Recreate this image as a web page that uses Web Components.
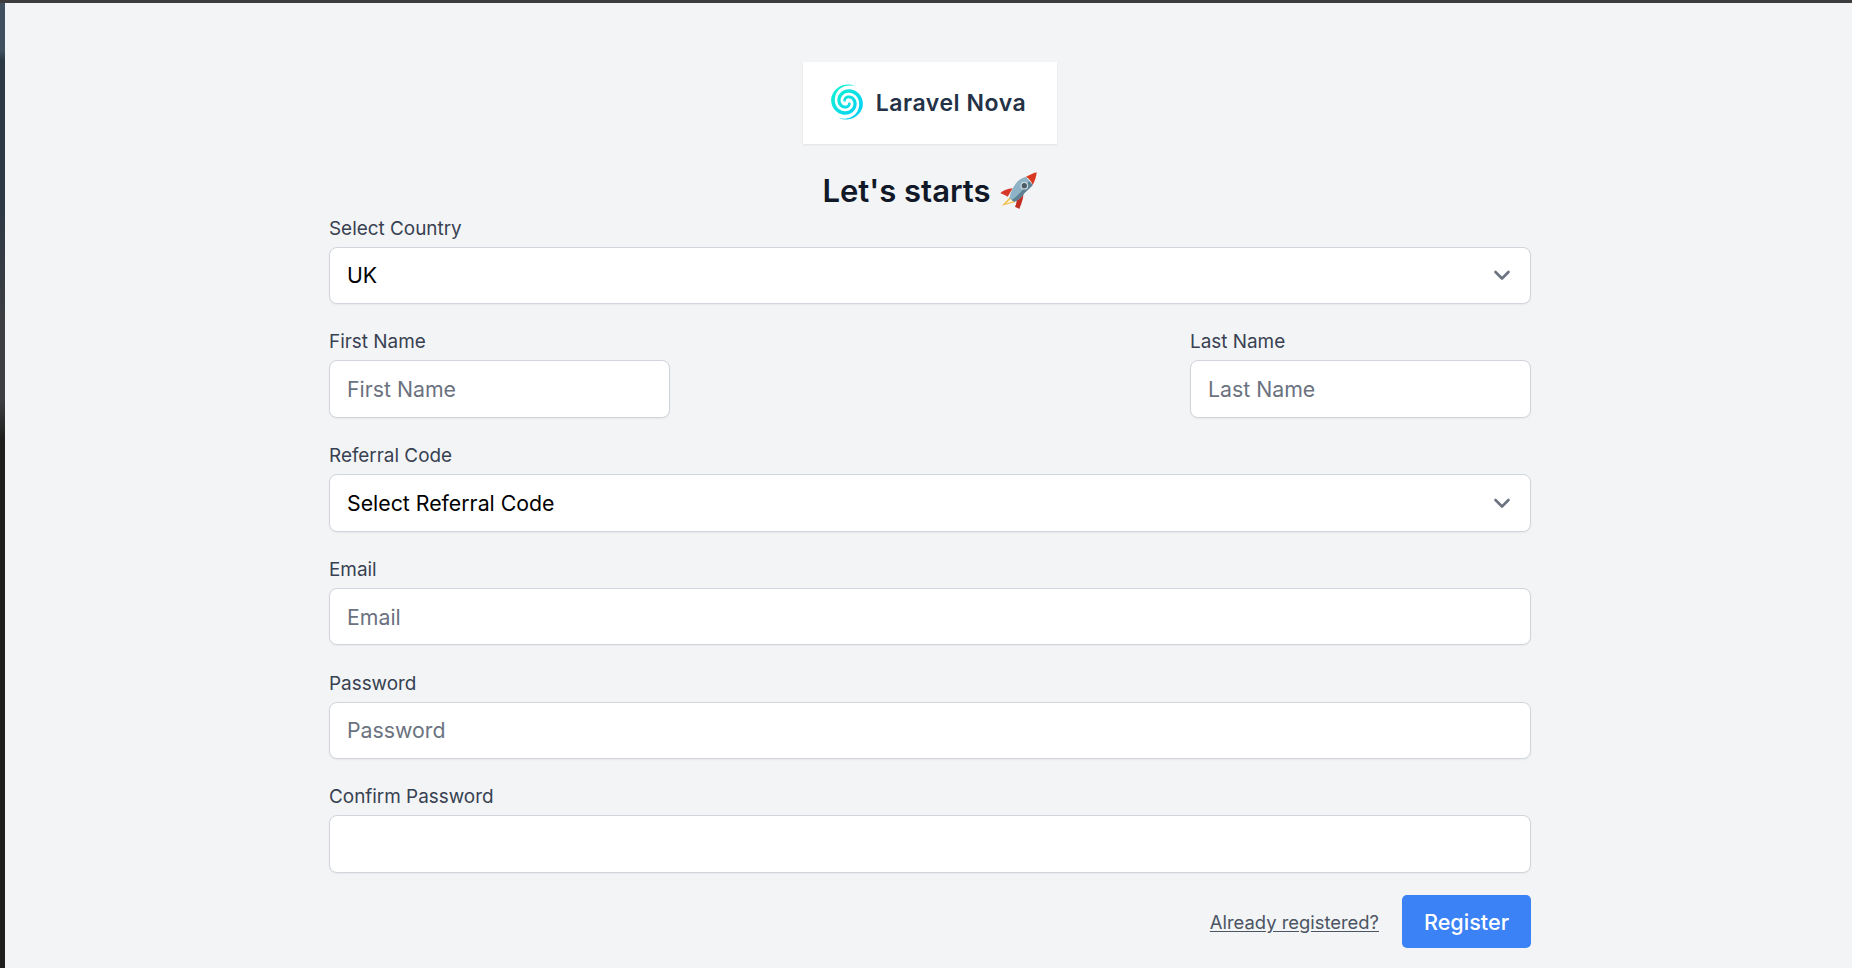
<!DOCTYPE html>
<html lang="en">
<head>
<meta charset="utf-8">
<title>Register</title>
<style>
  html, body { margin: 0; height: 100%; }
  body {
    background: #1c1c1a;
    overflow: hidden;
    font-family: Inter, "Liberation Sans", sans-serif;
  }
</style>
</head>
<body>
<register-page>
  <nova-logo slot="logo"></nova-logo>
  <span slot="title">Let's starts</span>
  <form-field label="Select Country"><select-box>UK</select-box></form-field>
  <name-row>
    <form-field label="First Name"><text-box placeholder="First Name"></text-box></form-field>
    <form-field label="Last Name"><text-box placeholder="Last Name"></text-box></form-field>
  </name-row>
  <form-field label="Referral Code"><select-box>Select Referral Code</select-box></form-field>
  <form-field label="Email"><text-box placeholder="Email"></text-box></form-field>
  <form-field label="Password"><text-box placeholder="Password"></text-box></form-field>
  <form-field label="Confirm Password"><text-box></text-box></form-field>
</register-page>

<script>
class RegisterPage extends HTMLElement {
  constructor() {
    super();
    this.attachShadow({ mode: "open" }).innerHTML = `
      <style>
        :host {
          display: block;
          box-sizing: border-box;
          height: 100vh;
          padding: 3px 0 0 5px;
          color: #111827;
          background:
            linear-gradient(#3d3d3d 3px, transparent 3px),
            linear-gradient(#40505f 50px, #2d3845 60px, #2d3845 200px, #3c3e42 320px, #3c3e42 400px, #1e1e1c 440px);
        }
        main {
          box-sizing: border-box;
          height: 100%;
          background: #f3f4f6;
          display: flex;
          flex-direction: column;
          align-items: center;
          padding: 59px 0 0 3px;
        }
        h1 {
          margin: 26px 0 4.5px;
          height: 42px;
          display: flex;
          align-items: center;
          gap: 9px;
          font-size: 31px;
          font-weight: 600;
          line-height: 42px;
        }
        .rocket { width: 38px; height: 38px; }
        .fields {
          width: 1202px;
          display: flex;
          flex-direction: column;
        }
        ::slotted(form-field), ::slotted(name-row) {
          margin-bottom: 26.2px;
        }
        .actions {
          width: 1202px;
          margin-top: -4px;
          display: flex;
          justify-content: flex-end;
          align-items: center;
          gap: 23px;
        }
        a {
          font-size: 18.4px;
          color: #4b5563;
          text-decoration: underline;
          text-underline-offset: 2px;
        }
        button {
          width: 129px;
          height: 53px;
          border: 0;
          border-radius: 5px;
          background: #3b82f6;
          color: #fff;
          font: 500 21.6px Inter, "Liberation Sans", sans-serif;
        }
      </style>
      <main>
        <slot name="logo"></slot>
        <h1>
          <slot name="title"></slot>
          <svg class="rocket" viewBox="-1 0 38 38">
            <path d="M9.3 24.7 L0.7 33.7 L14 30.3 Z" fill="#f2c14e"/>
            <path d="M9.5 27 L5 31.5 L12 29.5 Z" fill="#fff6d8"/>
            <path d="M11.7 16.3 C7 16.5 2 18.5 -0.7 21.3 C1 22 4 23 6.7 24.7 Z" fill="#d6392a"/>
            <path d="M22.3 21.3 C22.5 26 21 30 18.3 37 C17 36 15 35.5 14 34.7 C15.5 32 15.5 29 16 27 Z" fill="#c22f20"/>
            <path d="M25 4.7 C20 6 17 8.5 15 11.3 C12 15 9.5 21 8.3 26.3 L13.3 29.7 C18 28 21 25 23.3 21.3 C26.5 18 29.5 16 31.7 13 Z" fill="#8fb3c6"/>
            <path d="M31.7 13 C29.5 16 26.5 18 23.3 21.3 C21 25 18 28 13.3 29.7 L10.8 28 C17 24 24 16 28 9 Z" fill="#5d8093"/>
            <path d="M25 4.7 C28.5 3 32 1.3 35.7 0.3 C35.3 4.5 34 9 31.7 13 C30.5 9.5 28 6.5 25 4.7 Z" fill="#d9391f"/>
            <circle cx="23.3" cy="13.7" r="3.9" fill="#c7d5dc"/>
            <circle cx="23.3" cy="13.7" r="2.6" fill="#4b5c66"/>
          </svg>
        </h1>
        <div class="fields">
          <slot></slot>
        </div>
        <div class="actions">
          <a href="#">Already registered?</a>
          <button type="button">Register</button>
        </div>
      </main>
    `;
  }
}

// tapered spiral arm, outer tail to centre, as a closed polygon
function spiralArm(start) {
  const outer = [], inner = [];
  for (let i = 0; i <= 60; i++) {
    const t = i / 60;
    const a = start - t * 2.6 * Math.PI;
    const r = 17 - 15 * t;
    const w = Math.min(t * 8, 1.9 - t * 0.5);
    outer.push(`${(17 + (r + w) * Math.cos(a)).toFixed(2)} ${(18 + (r + w) * Math.sin(a)).toFixed(2)}`);
    inner.unshift(`${(17 + (r - w) * Math.cos(a)).toFixed(2)} ${(18 + (r - w) * Math.sin(a)).toFixed(2)}`);
  }
  return "M" + outer.concat(inner).join("L") + "Z";
}

class NovaLogo extends HTMLElement {
  constructor() {
    super();
    this.attachShadow({ mode: "open" }).innerHTML = `
      <style>
        :host {
          display: flex;
          align-items: center;
          justify-content: center;
          gap: 11px;
          box-sizing: border-box;
          width: 254px;
          height: 82px;
          padding-right: 5px;
          background: #fff;
          box-shadow: 0 1px 2px rgba(0, 0, 0, 0.08);
        }
        span {
          font-size: 23px;
          font-weight: 600;
          letter-spacing: 0.55px;
          color: #243247;
          margin-bottom: 1px;
        }
        svg { width: 36px; height: 38px; margin-bottom: 3px; }
      </style>
      <svg viewBox="0 0 34 36">
        <defs>
          <linearGradient id="g" gradientUnits="userSpaceOnUse" x1="3" y1="4" x2="31" y2="32">
            <stop offset="0" stop-color="#14f2d2"/>
            <stop offset="1" stop-color="#06cdf6"/>
          </linearGradient>
        </defs>
        <path fill="url(#g)" d="${spiralArm(-1.05)}"/>
        <path fill="url(#g)" d="${spiralArm(-1.05 + Math.PI)}"/>
      </svg>
      <span>Laravel Nova</span>
    `;
  }
}

class NameRow extends HTMLElement {
  constructor() {
    super();
    this.attachShadow({ mode: "open" }).innerHTML = `
      <style>
        :host {
          display: flex;
          justify-content: space-between;
          --field-width: 341px;
        }
      </style>
      <slot></slot>
    `;
  }
}

class FormField extends HTMLElement {
  constructor() {
    super();
    this.attachShadow({ mode: "open" }).innerHTML = `
      <style>
        :host {
          display: block;
          width: var(--field-width, auto);
          font-size: 18.9px;
        }
        label {
          display: block;
          height: 23px;
          line-height: 23px;
          margin-bottom: 7px;
          color: #374151;
        }
      </style>
      <label></label>
      <slot></slot>
    `;
    this.shadowRoot.querySelector("label").textContent = this.getAttribute("label");
  }
}

const boxStyle = `
  :host {
    display: flex;
    align-items: center;
    justify-content: space-between;
    box-sizing: border-box;
    height: 57.6px;
    padding: 0 17px;
    background: #fff;
    border: 1px solid #d1d5db;
    border-radius: 8px;
    box-shadow: 0 1px 2px rgba(0, 0, 0, 0.05);
    font-size: 21.3px;
  }
`;

class SelectBox extends HTMLElement {
  constructor() {
    super();
    this.attachShadow({ mode: "open" }).innerHTML = `
      <style>${boxStyle}
        :host { color: #000; }
        svg { width: 24px; height: 24px; margin-right: -1px; }
      </style>
      <slot></slot>
      <svg viewBox="0 0 24 24" fill="none" stroke="#6b7280" stroke-width="2.6" stroke-linecap="round" stroke-linejoin="round">
        <path d="M5.5 9l6.5 6.5 6.5-6.5"/>
      </svg>
    `;
  }
}

class TextBox extends HTMLElement {
  constructor() {
    super();
    this.attachShadow({ mode: "open" }).innerHTML = `
      <style>${boxStyle}
        :host { color: #6b7280; }
      </style>
      <span></span>
    `;
    this.shadowRoot.querySelector("span").textContent = this.getAttribute("placeholder") || "";
  }
}

customElements.define("register-page", RegisterPage);
customElements.define("nova-logo", NovaLogo);
customElements.define("name-row", NameRow);
customElements.define("form-field", FormField);
customElements.define("select-box", SelectBox);
customElements.define("text-box", TextBox);
</script>
</body>
</html>
